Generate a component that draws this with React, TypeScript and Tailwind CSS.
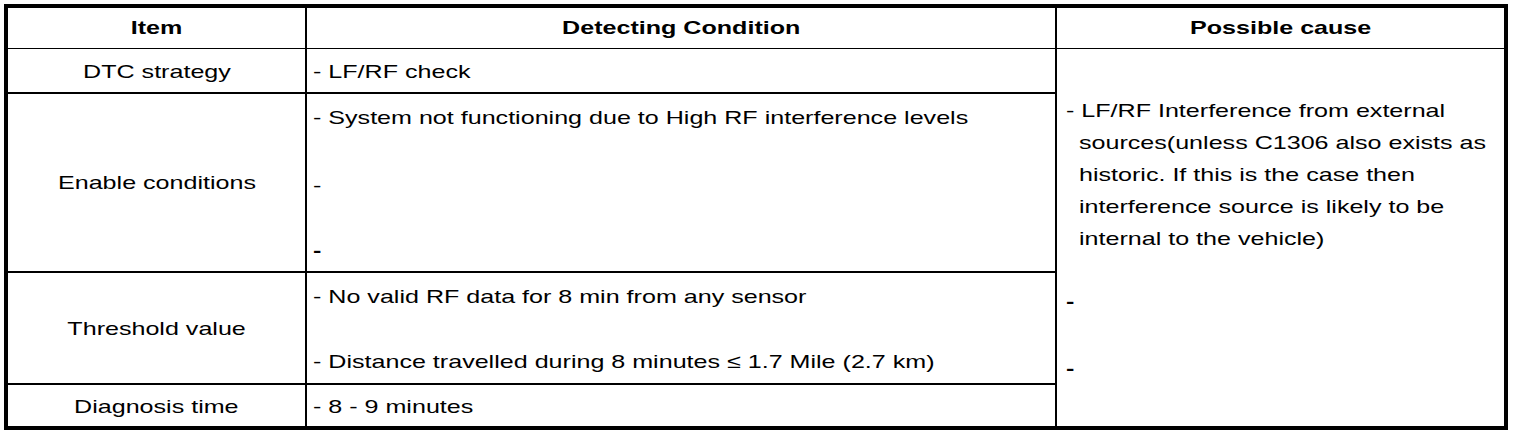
import React from "react";

const S = ({ children, bold = false, center = false }: { children: React.ReactNode; bold?: boolean; center?: boolean }) => (
  <span
    className={`inline-block whitespace-nowrap scale-x-[1.32] ${center ? "origin-center" : "origin-left"} ${bold ? "font-bold" : ""}`}
  >
    {children}
  </span>
);

const Line = ({ children, className = "" }: { children: React.ReactNode; className?: string }) => (
  <div className={`h-[32px] leading-[32px] ${className}`}>{children}</div>
);

export default function App() {
  return (
    <div className="w-[1520px] h-[436px] bg-white p-[4px] text-black text-[19px] font-['Liberation_Sans',Arial,sans-serif]">
      <div className="w-[1504px] h-[426px] border-4 border-black grid grid-cols-[299px_750px_447px] grid-rows-[41px_45px_179px_112px_41px]">
        {/* Header */}
        <div className="border-r-2 border-b border-black flex items-center justify-center pt-[1px]">
          <S bold center>Item</S>
        </div>
        <div className="border-r-2 border-b border-black flex items-center justify-center pt-[1px]">
          <S bold center>Detecting Condition</S>
        </div>
        <div className="border-b border-black flex items-center justify-center pt-[1px]">
          <S bold center>Possible cause</S>
        </div>

        {/* Row 1 */}
        <div className="border-r-2 border-b-2 border-black flex items-center justify-center pt-[3px]">
          <S center>DTC strategy</S>
        </div>
        <div className="border-r-2 border-b-2 border-black flex items-center pl-[6px] pt-[3px]">
          <S>- LF/RF check</S>
        </div>
        <div className="row-span-4 pl-[9px] pt-[46px]">
          <Line><S>- LF/RF Interference from external</S></Line>
          <Line className="pl-[13px]"><S>sources(unless C1306 also exists as</S></Line>
          <Line className="pl-[13px]"><S>historic. If this is the case then</S></Line>
          <Line className="pl-[13px]"><S>interference source is likely to be</S></Line>
          <Line className="pl-[13px]"><S>internal to the vehicle)</S></Line>
          <Line className="mt-[31px]"><S bold>-</S></Line>
          <Line className="mt-[35px]"><S bold>-</S></Line>
        </div>

        {/* Row 2 */}
        <div className="border-r-2 border-b-2 border-black flex items-center justify-center pt-[2px]">
          <S center>Enable conditions</S>
        </div>
        <div className="border-r-2 border-b-2 border-black pl-[6px] pt-[8px]">
          <Line><S>- System not functioning due to High RF interference levels</S></Line>
          <Line className="mt-[36px]"><S>-</S></Line>
          <Line className="mt-[33px]"><S bold>-</S></Line>
        </div>

        {/* Row 3 */}
        <div className="border-r-2 border-b-2 border-black flex items-center justify-center pt-[2px]">
          <S center>Threshold value</S>
        </div>
        <div className="border-r-2 border-b-2 border-black pl-[6px] pt-[8px]">
          <Line><S>- No valid RF data for 8 min from any sensor</S></Line>
          <Line className="mt-[33px]"><S>- Distance travelled during 8 minutes ≤ 1.7 Mile (2.7 km)</S></Line>
        </div>

        {/* Row 4 */}
        <div className="border-r-2 border-black flex items-center justify-center pt-[3px]">
          <S center>Diagnosis time</S>
        </div>
        <div className="border-r-2 border-black flex items-center pl-[6px] pt-[3px]">
          <S>- 8 - 9 minutes</S>
        </div>
      </div>
    </div>
  );
}
